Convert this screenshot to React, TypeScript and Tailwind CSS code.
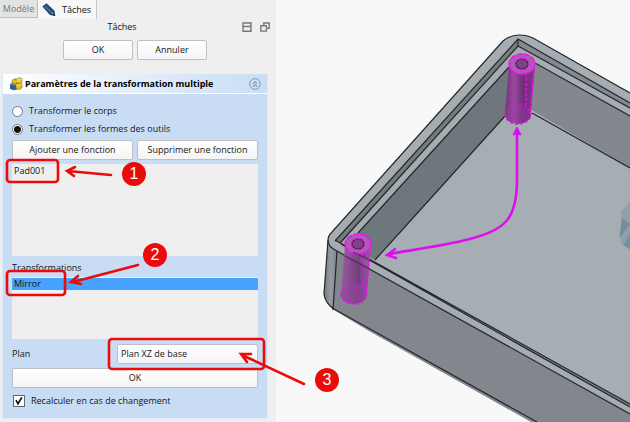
import React from 'react';
import clsx from 'clsx';

const features = ['Pad001'];
const transformations = ['Mirror'];

const badges = [
  { label: '1', place: 'left-[122px] top-[162px]' },
  { label: '2', place: 'left-[143px] top-[243px]' },
  { label: '3', place: 'left-[315px] top-[368px]' },
];

const PushButton = ({ children, className }: { children: React.ReactNode; className?: string }) => (
  <button
    type="button"
    className={clsx(
      'h-5 rounded-xs border border-[#bdbfc2] bg-linear-to-b from-white to-[#f4f4f4] text-center leading-4',
      className
    )}
  >
    {children}
  </button>
);

const PencilIcon = () => (
  <svg viewBox="0 0 14 14" className="size-3.5 shrink-0" aria-hidden="true">
    <path d="M.4 3.6 4.4.2l8 7.6 1 5.2-5.4-1z" fill="#1c3d60" />
    <path d="M1.6 3.7 4.2 1.5l7 7-2.6 2.2z" fill="#2a5a8c" />
    <path d="m3.2 3.5 6 6.2" stroke="#5b8ec0" strokeWidth=".8" />
    <path d="m8.9 10.6 2-1.8.7 2.7z" fill="#8a9aa8" />
    <path d="m11.2 11.3 1.9 1.5-2.4-.6z" fill="#222" />
  </svg>
);

const MultiTransformIcon = () => (
  <svg viewBox="0 0 14 14" className="size-3.5 shrink-0" aria-hidden="true">
    <path d="M1 7.4 3.6 5.6 8 7.2v5.2L5 13.3 1 12z" fill="#315f94" />
    <path d="M1 7.4 3.6 5.6 8 7.2 5.2 8.6z" fill="#6792bd" />
    <path d="m3 3.4 3-1.7 3 1v3.5L6.4 8 3 6.7z" fill="#d0ac18" stroke="#6e5a08" strokeWidth=".5" />
    <path d="M7.4 2 10.2.7l2.8.9v3.8l-2.7 1.4-2.9-.9z" fill="#e7cf2c" stroke="#6e5a08" strokeWidth=".5" />
    <path d="m6.8 7.4 3.2-1.5 3 .9v4l-3 1.8-3.2-1z" fill="#ddbd20" stroke="#6e5a08" strokeWidth=".5" />
    <path d="m7.8 2.2 2.5.7 2.4-1.1M7.2 7.7l2.9.8 2.6-1.3M3.5 3.7l2.8 1 2.3-1.5" fill="none" stroke="#fff06a" strokeWidth=".8" />
  </svg>
);

const DockIcon = () => (
  <svg viewBox="0 0 10 10" className="size-2.5" fill="none" stroke="#777" aria-hidden="true">
    <path d="M1 1h8v8.2H1zM1 4.5h8" strokeWidth="1.4" />
  </svg>
);

const FloatIcon = () => (
  <svg viewBox="0 0 10 10" className="size-2.5" fill="none" stroke="#777" aria-hidden="true">
    <path d="M3.8 3.4V1h5.4v5.4H6.6M.8 3.7h5.6v5.4H.8z" strokeWidth="1.4" />
  </svg>
);

const CollapseIcon = () => (
  <svg viewBox="0 0 12 12" className="size-3" fill="none" stroke="#7f92a8" aria-hidden="true">
    <circle cx="6" cy="6" r="5.3" strokeWidth=".9" />
    <path d="m3.9 5.7 2.1-2 2.1 2M3.9 8.7l2.1-2 2.1 2" strokeWidth="1.1" />
  </svg>
);

const Post = ({ x, y, lean, height, faded }: { x: number; y: number; lean: number; height: number; faded?: boolean }) => (
  <g transform={`translate(${x} ${y})`}>
    <path
      d={`M-13 0 L${-13 - lean} ${height} A13 10 0 0 0 ${13 - lean} ${height} L13 0 A13 10 0 0 1 -13 0z`}
      fill={faded ? 'url(#postFaded)' : 'url(#post)'}
    />
    <ellipse cx={-lean} cy={height} rx="13" ry="10" fill="#92459a" fillOpacity={faded ? 0.5 : 0.3} />
    <ellipse rx="13" ry="10" fill="#b058b8" stroke="#f010f0" strokeWidth="1.5" strokeDasharray="6 1" />
    <ellipse rx="6" ry="5" fill="#7c4386" stroke="#3a1f40" strokeWidth="1.2" />
    <ellipse rx="6.5" ry="5.5" fill="none" stroke="#e610e6" strokeWidth="1.3" strokeDasharray="2 2" />
    <g fill="none" stroke="#e612e6" strokeWidth="1.4" strokeDasharray="3 2">
      <path d={`M${-13 - lean} ${height}A13 10 0 0 0 ${13 - lean} ${height}`} />
      <g strokeOpacity=".6">
        <path d={`M${-13 - lean} ${height}A13 10 0 0 1 ${13 - lean} ${height}`} />
        <ellipse cx={-lean} cy={height} rx="6.5" ry="5.5" strokeDasharray="2 2" />
      </g>
      <path d={`M4 9V${height - 8}`} />
      <path d={`M12 6 ${12 - lean} ${height}`} strokeDasharray="6 1" />
    </g>
  </g>
);

const Scene = () => (
  <svg
    viewBox="276 0 354 422"
    preserveAspectRatio="xMinYMin slice"
    className="block h-full w-full"
    role="img"
    aria-label="Boîtier 3D"
  >
    <defs>
      <linearGradient id="post">
        <stop offset="0" stopColor="#743079" />
        <stop offset=".3" stopColor="#9a4aa0" />
        <stop offset=".6" stopColor="#702e78" />
        <stop offset="1" stopColor="#8a308f" />
      </linearGradient>
      <linearGradient id="postFaded">
        <stop offset="0" stopColor="#a050a8" stopOpacity=".8" />
        <stop offset=".4" stopColor="#7d3d85" stopOpacity=".85" />
        <stop offset=".6" stopColor="#6d3477" stopOpacity=".85" />
        <stop offset="1" stopColor="#a24fab" stopOpacity=".8" />
      </linearGradient>
      <linearGradient id="corner">
        <stop offset="0" stopColor="#727980" />
        <stop offset=".5" stopColor="#969ca2" />
        <stop offset="1" stopColor="#81868d" />
      </linearGradient>
    </defs>

    {/* Outer walls */}
    <path d="M328 240 324 294Q325 303 334 310L369 331 531 422H630V400L337 251z" fill="#82868d" />
    <path d="M328 240 324 294Q325 303 333 310L337 251z" fill="url(#corner)" />

    {/* Rim */}
    <path d="M332 232 503 41Q510 35 519 35 527 35 533 38L630 93V414L337 251Q328 247 328 240 328 236 332 232z" fill="#a5adb2" />
    {/* Groove */}
    <path d="M335 241 518 39 518 46 341 243z" fill="#747d7e" />
    <path d="M518 39 630 103V108L518 46z" fill="#858a91" />
    {/* Inner walls and floor */}
    <path d="M358 233 509 67 518 60V108L375 260 352 249z" fill="#6e777c" />
    <path d="M518 54 630 116V168L518 105z" fill="#83888f" />
    <path d="M518 102 630 168V405L375 261z" fill="#a6adb3" />
    <path d="M335 240 630 404V407L341 244z" fill="#7c8487" />

    <g fill="none" stroke="#24282b" strokeWidth="1.2">
      <path d="M630 414 337 251Q328 247 328 240 328 236 332 232L503 41Q510 35 519 35 527 35 533 38L630 93" />
      <path d="M335 241 518 39 630 103M340 243 518 46 630 108M518 39V46" />
      <path d="M358 233 509 67M535 63 630 116" />
      <path d="M375 260 505 116M532 113 630 168" />
      <path d="M335 240 630 404M341 244 630 407" />
      <path d="M337 251 333 310M328 240 324 294Q325 303 334 309L370 329 537 422" />
    </g>

    {/* Origin planes */}
    <path d="M630 202 621 212 621 244 630 250z" fill="#8fa0aa" />
    <path d="M622 218 630 224 619 239z" fill="#748d9f" />
    <path d="M630 232 624 245 630 249z" fill="#768fa1" />

    <Post x={522} y={64} lean={4} height={50} />
    <Post x={358} y={244} lean={4} height={50} faded />
    {/* Near edge of the box seen through the post */}
    <path d="M345 256 370 269M353 252 371 261" stroke="#4b2952" strokeWidth="1" />

    <g fill="none" stroke="#dd0ff0" strokeWidth="2.6" strokeLinecap="round">
      <path d="M517 131V180C517 219 505 230 470 239 442 246 418 249 389 254" />
      <path d="M395 249 387 255 396 258" strokeWidth="2.4" />
    </g>
    <path d="M517 127 513 135 517 134 521 135z" fill="#dd0ff0" stroke="#dd0ff0" strokeLinejoin="round" />
  </svg>
);

const Annotations = () => (
  <div className="pointer-events-none absolute top-0 left-0">
    <svg width="630" height="422" viewBox="0 0 630 422" fill="none" stroke="#ea0b0b" strokeWidth="2.6" strokeLinecap="round" aria-hidden="true">
      <rect x="7" y="160" width="51" height="22" rx="3" />
      <rect x="7" y="271" width="58" height="24" rx="3" />
      <rect x="109" y="339" width="155" height="30" rx="3" />
      <path d="M111 175 68 171M75 167 67 171 74 176" />
      <path d="M138 265 73 282M78 276 71 282 81 284" />
      <path d="M304 384 242 355M251 354 241 354 247 362" />
    </svg>
    {badges.map(({ label, place }) => (
      <span
        key={label}
        className={clsx(
          "absolute flex size-6 items-center justify-center rounded-full bg-[#ea0b0b] font-['Liberation_Sans',sans-serif] text-base leading-none font-medium text-white",
          place
        )}
      >
        {label}
      </span>
    ))}
  </div>
);

const TaskPanel = () => (
  <aside className="w-[276px] shrink-0 bg-[#efefef]">
    <div className="flex h-[19px]" role="tablist">
      <button type="button" role="tab" aria-selected="false" className="h-[18px] w-[38px] border-r border-b border-[#bcbcbc] bg-[#e3e3e3] text-[#777]">
        Modèle
      </button>
      <button type="button" role="tab" aria-selected="true" className="flex w-[59px] items-center gap-1.5 border-r border-[#c9c9c9] bg-[#f7f7f7] pl-1">
        <PencilIcon />
        Tâches
      </button>
    </div>

    <header className="relative flex h-[15px] items-center justify-center pr-8">
      <h1>Tâches</h1>
      <div className="absolute right-1.5 flex gap-2">
        <button type="button" aria-label="Ancrer"><DockIcon /></button>
        <button type="button" aria-label="Détacher"><FloatIcon /></button>
      </div>
    </header>

    <div className="mt-1.5 flex justify-center gap-1 pr-1.5">
      <PushButton className="w-[70px]">OK</PushButton>
      <PushButton className="w-[70px]">Annuler</PushButton>
    </div>

    <section className="mt-3.5 mr-2 ml-0.5 rounded-xs border border-t-0 border-[#dceafa] bg-[#c8ddf4]">
      <div className="flex h-5 items-center gap-0.5 border-b border-white bg-linear-to-r from-white to-[#c8ddf4] pr-1.5 pl-1.5">
        <MultiTransformIcon />
        <h2 className="flex-1 font-bold text-black">Paramètres de la transformation multiple</h2>
        <button type="button" aria-label="Réduire"><CollapseIcon /></button>
      </div>

      <form className="px-[9px] pt-2 pb-2.5">
        {['Transformer le corps', 'Transformer les formes des outils'].map((label, i) => (
          <label key={label} className="flex h-[18px] items-center gap-1.5">
            <input
              type="radio"
              name="mode"
              defaultChecked={i === 1}
              className="size-[11px] appearance-none rounded-full border border-[#777] bg-white checked:bg-[radial-gradient(circle,#111_0_3px,#fff_4px)]"
            />
            {label}
          </label>
        ))}

        <div className="mt-0.5 grid grid-cols-2 gap-1">
          <PushButton>Ajouter une fonction</PushButton>
          <PushButton>Supprimer une fonction</PushButton>
        </div>

        <ul className="mt-1 h-[92px] bg-[#efefef] pt-px">
          {features.map((name) => (
            <li key={name} className="px-0.5 leading-3">{name}</li>
          ))}
        </ul>

        <h3 className="mt-1.5 h-[15px] leading-3">Transformations</h3>
        <ul className="h-[62px] bg-[#efefef] pt-px">
          {transformations.map((name) => (
            <li key={name} className="bg-[#48a2ff] px-0.5 leading-3">{name}</li>
          ))}
        </ul>

        <div className="mt-[5px] flex h-5 items-center justify-between">
          <label htmlFor="plan">Plan</label>
          <select id="plan" className="h-5 w-[141px] appearance-none rounded-xs border border-[#bdbfc2] bg-linear-to-b from-white to-[#f4f4f4] px-[3px] leading-4">
            <option>Plan XZ de base</option>
          </select>
        </div>
        <PushButton className="mt-1 w-full">OK</PushButton>
        <label className="mt-1.5 flex h-3.5 items-center gap-1.5">
          <span className="relative ml-px size-3">
            <input type="checkbox" defaultChecked className="peer block size-3 appearance-none border border-[#666] bg-white" />
            <svg viewBox="0 0 12 12" className="pointer-events-none absolute inset-0 hidden size-3 peer-checked:block" fill="none" stroke="#111" strokeWidth="1.7" aria-hidden="true">
              <path d="m3 5.2 2 3.6L8.8 2.4" />
            </svg>
          </span>
          Recalculer en cas de changement
        </label>
      </form>
    </section>
  </aside>
);

const App = () => {
  return (
    <main className="relative flex min-h-screen overflow-hidden bg-[#f8f8f8] font-['Open_Sans',sans-serif] text-[9px] leading-3 text-[#151515]">
      <TaskPanel />
      <section className="min-w-0 flex-1">
        <Scene />
      </section>
      <Annotations />
    </main>
  );
};

export default App;
